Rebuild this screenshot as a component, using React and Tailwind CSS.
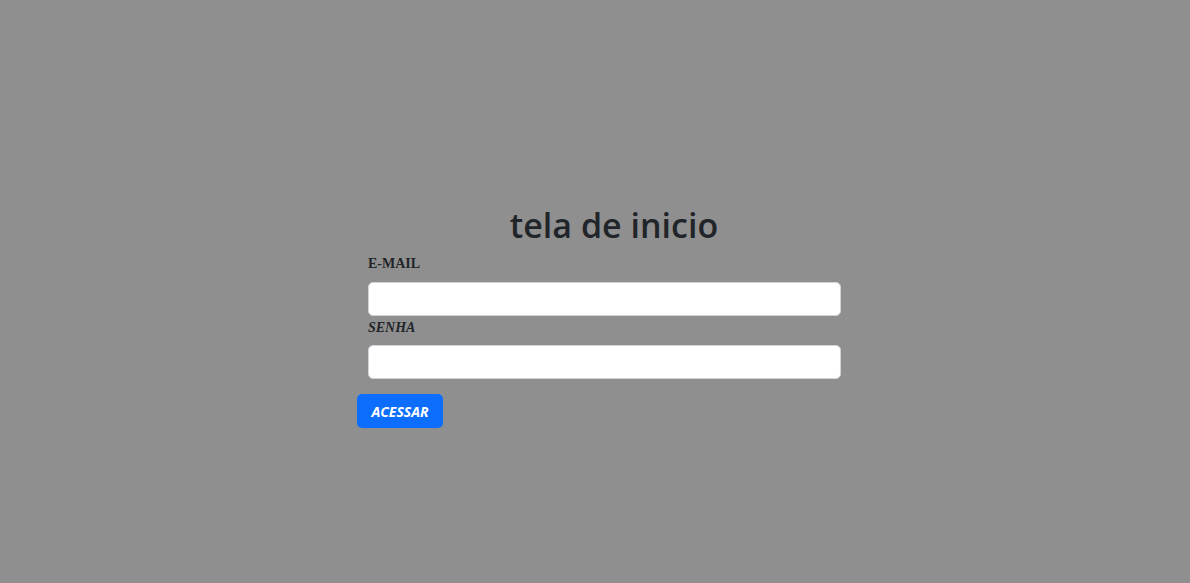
export default function App() {
  return (
    <div className="min-h-[583px] w-full bg-[#8f8f8f] pt-[201px]">
      <form className="ml-[357px] w-[514px] flex flex-col" onSubmit={(e) => e.preventDefault()}>
        <h1 className="text-center text-[34px] leading-[48px] font-semibold text-[#212529] font-['Open_Sans',sans-serif]">
          tela de inicio
        </h1>
        <label className="ml-[11px] mt-[5px] text-[14px] leading-[20px] font-bold text-[#212529] font-['Liberation_Serif',serif]">
          E-MAIL
        </label>
        <input
          type="email"
          className="ml-[11px] mt-[8px] w-[473px] h-[34px] rounded-[5px] bg-white border border-[#ced4da] outline-none px-3"
        />
        <label className="ml-[11px] mt-[2px] text-[14px] leading-[20px] font-bold italic text-[#212529] font-['Liberation_Serif',serif]">
          SENHA
        </label>
        <input
          type="password"
          className="ml-[11px] mt-[7px] w-[473px] h-[34px] rounded-[5px] bg-white border border-[#ced4da] outline-none px-3"
        />
        <div className="mt-[15px]">
          <button
            type="submit"
            className="h-[34px] w-[86px] rounded-[5px] bg-[#0d6efd] text-white text-[14px] font-bold italic font-['Open_Sans',sans-serif]"
          >
            ACESSAR
          </button>
        </div>
      </form>
    </div>
  );
}
